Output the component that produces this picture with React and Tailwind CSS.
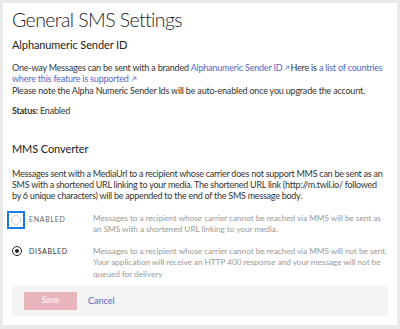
export default function App() {
    return (
        <div className="min-h-[329px] bg-[#e9e9e9] pt-[3px] pl-[3px] pr-[3px] font-['Lato',sans-serif] text-[#333]">
            <div className="h-[322px] bg-white px-[9px] pt-[4px]">
                <h1 className="text-[19.5px] font-light leading-[26px] tracking-[-0.6px] text-[#222]">General SMS Settings</h1>

                <h2 className="mt-[3.5px] text-[11px] leading-[16px] tracking-[-0.1px] text-[#222]">Alphanumeric Sender ID</h2>

                <p className="mt-[9px] text-[9px] leading-[11.5px] tracking-[-0.2px]">
                    One-way Messages can be sent with a branded{' '}
                    <a className="text-[#5566c4]">Alphanumeric Sender ID <ExtIcon /></a>Here is{' '}
                    <a className="text-[#5566c4]">a list of countries where this feature is supported <ExtIcon /></a>
                    <br />
                    Please note the Alpha Numeric Sender Ids will be auto-enabled once you upgrade the account.
                </p>

                <p className="mt-[9px] text-[9px] leading-[12px] tracking-[-0.2px]">
                    <span className="font-bold">Status:</span> Enabled
                </p>

                <h2 className="mt-[23.5px] text-[11px] leading-[16px] tracking-[-0.1px] text-[#222]">MMS Converter</h2>

                <p className="mt-[11.5px] pr-[5px] text-[9px] leading-[11px] tracking-[-0.26px]">
                    Messages sent with a MediaUrl to a recipient whose carrier does not support MMS can be sent as an SMS with a shortened URL linking to your media. The shortened URL link (http://m.twil.io/ followed by 6 unique characters) will be appended to the end of the SMS message body.
                </p>

                <div className="mt-[11.5px] flex flex-col gap-[10px]">
                    <div className="flex items-start">
                        <div className="-ml-[5px] -mt-[2px] flex w-[86px] shrink-0 items-center">
                            <span className="flex h-[18px] w-[18px] items-center justify-center border-2 border-[#1a7be0]">
                                <span className="h-[10px] w-[10px] rounded-full border border-[#ccc]" />
                            </span>
                            <span className="ml-[4px] text-[7px] tracking-[0.1em] text-[#666]">ENABLED</span>
                        </div>
                        <p className="flex-1 text-[8.25px] leading-[11.5px] tracking-[-0.05px] text-[#999]">
                            Messages to a recipient whose carrier cannot be reached via MMS will be sent as an SMS with a shortened URL linking to your media.
                        </p>
                    </div>
                    <div className="flex items-start">
                        <div className="flex w-[81px] shrink-0 items-center">
                            <span className="flex h-[10px] w-[10px] items-center justify-center rounded-full border border-[#222]">
                                <span className="h-[4px] w-[4px] rounded-full bg-[#222]" />
                            </span>
                            <span className="ml-[7px] text-[7px] tracking-[0.1em] text-[#333]">DISABLED</span>
                        </div>
                        <p className="flex-1 text-[8.25px] leading-[11.5px] tracking-[-0.05px] text-[#999]">
                            Messages to a recipient whose carrier cannot be reached via MMS will not be sent. Your application will receive an HTTP 400 response and your message will not be queued for delivery
                        </p>
                    </div>
                </div>

                <div className="mt-[5px] flex h-[31px] items-center bg-[#f4f4f4] px-[12px]">
                    <button className="h-[18px] w-[53px] bg-[#e8b5bd] text-[8.5px] text-white">Save</button>
                    <a className="ml-[11px] text-[9px] text-[#5566c4]">Cancel</a>
                </div>
            </div>
        </div>
    );
}

function ExtIcon() {
    return (
        <svg viewBox="0 0 8 8" className="inline-block h-[6px] w-[6px] align-baseline" fill="none" stroke="currentColor" strokeWidth="1">
            <path d="M1.5 6.5 6.5 1.5M3 1.5h3.5V5" />
        </svg>
    );
}
